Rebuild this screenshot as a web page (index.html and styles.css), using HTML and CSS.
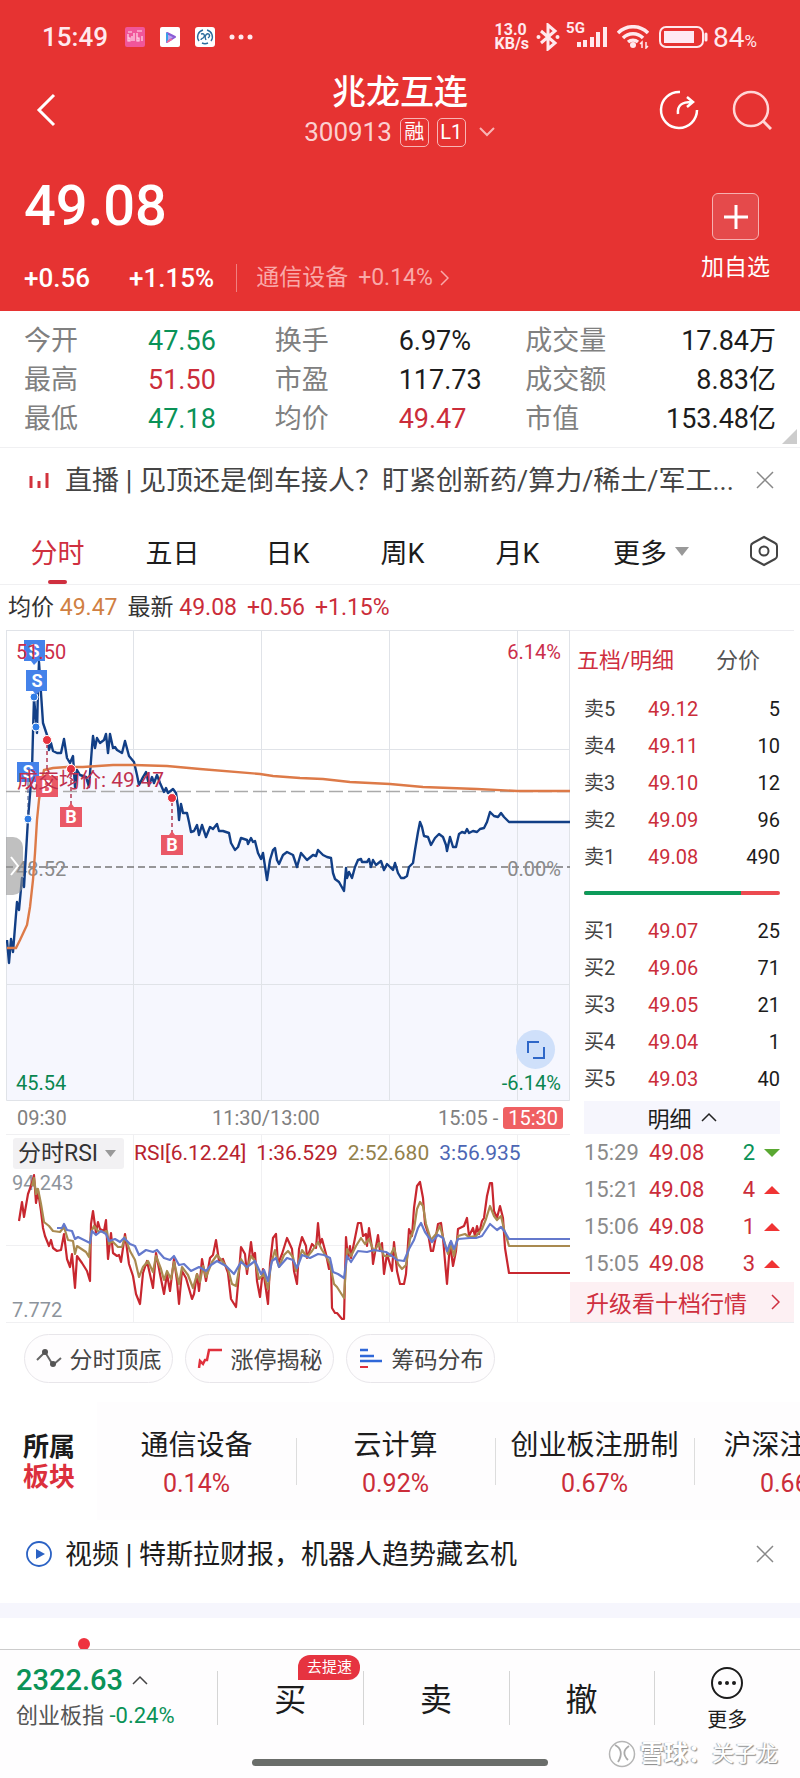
FILE: index.html
```html
<!DOCTYPE html>
<html lang="zh-CN">
<head>
    <meta charset="UTF-8">
    <meta name="viewport" content="width=device-width, initial-scale=1.0">
    <title>兆龙互连 300913</title>
    <link rel="stylesheet" href="styles.css">
</head>
<body>
    <header class="header">
        <div class="status-bar">
            <span class="clock">15:49</span>
            <svg class="app-icon" viewBox="0 0 20 20"><rect width="20" height="20" rx="2" fill="#f0569a"/><path d="M3 7v7h2v-3H3M7 9v5M9 6v8M12 6v8h2v-3h-2M17 9v5M3 5h4M12 4h5" stroke="#ffd9ea" stroke-width="1.2" fill="none"/></svg>
            <svg class="app-icon" viewBox="0 0 20 20"><rect width="20" height="20" rx="2" fill="#fff"/><path d="M7 6l8 4-8 5z" fill="#b9a6ee" stroke-width="2" stroke="#8b5bd6" stroke-linejoin="round"/><path d="M7 15V6" stroke="#3aa0e8" stroke-width="2"/><path d="M7 15l5-3" stroke="#ef6a9c" stroke-width="2"/></svg>
            <svg class="app-icon" viewBox="0 0 20 20"><rect width="20" height="20" rx="3" fill="#fff"/><path d="M8 3a7 7 0 0 0-4 11M12 3a7 7 0 0 1 4 11M7 16a7 7 0 0 0 6 0M6 7c3-1 4 1 3 3s-3 1-3 3M11 13c-1-2-1-5 1-6s4 2 1 4" fill="none" stroke="#2c6c9c" stroke-width="1.4"/></svg>
            <svg class="more-dots" viewBox="0 0 24 6"><circle cx="3" cy="3" r="2.5"/><circle cx="12" cy="3" r="2.5"/><circle cx="21" cy="3" r="2.5"/></svg>
            <span class="net-speed">13.0<br>KB/s</span>
            <svg class="bluetooth" viewBox="0 0 24 28"><path d="M5 8l14 12-7 6V2l7 6L5 20" fill="none" stroke="#ffe9ee" stroke-width="3"/><circle cx="2.5" cy="14" r="2" fill="#ffe9ee"/><circle cx="21.5" cy="14" r="2" fill="#ffe9ee"/></svg>
            <span class="signal"><span class="net-type">5G</span><svg viewBox="0 0 32 22"><path d="M3 21v-5M9 21v-7M16 21V11M22 21V6M29 21V1" stroke="#ffe9ee" stroke-width="4"/></svg></span>
            <svg class="wifi" viewBox="0 0 32 24"><g fill="none" stroke="#ffe9ee" stroke-width="3.5"><path d="M1 8a21 21 0 0 1 30 0"/><path d="M6 13a14 14 0 0 1 20 0"/><path d="M11 17a8 8 0 0 1 10 0"/></g><circle cx="16" cy="20" r="3" fill="#ffe9ee"/><path d="M25 23v-6l-2 2M29 17v6l2-2" stroke="#ffe9ee" stroke-width="1.5" fill="none"/></svg>
            <svg class="battery" viewBox="0 0 49 22"><rect x="1" y="1" width="43" height="20" rx="6" fill="none" stroke="#ffe9ee" stroke-width="2"/><rect x="5" y="5" width="30" height="12" fill="#ffe9f3"/><path d="M47 8v6" stroke="#ffe9ee" stroke-width="3" stroke-linecap="round"/></svg>
            <span class="battery-text">84<small>%</small></span>
        </div>

        <nav class="nav">
            <button class="icon-btn back" aria-label="返回"><svg width="20" height="34" viewBox="0 0 20 34"><path d="M18 2L3 17l15 15" fill="none" stroke="#fff" stroke-width="3"/></svg></button>
            <div class="title">
                <h1>兆龙互连</h1>
                <div class="code">300913 <span class="tag">融</span><span class="tag">L1</span><svg width="18" height="12" viewBox="0 0 18 12"><path d="M2 2l7 7 7-7" fill="none" stroke="#f8b5b5" stroke-width="2"/></svg></div>
            </div>
            <div class="nav-actions">
                <button class="icon-btn" aria-label="分享"><svg width="40" height="40" viewBox="0 0 40 40"><path d="M21 2a18 18 0 1 0 17 18" fill="none" stroke="#fff" stroke-width="2.5"/><path d="M19 24c-1-9 4-12 14-12M28 7l6 5-6 5" fill="none" stroke="#fff" stroke-width="2.5"/></svg></button>
                <button class="icon-btn" aria-label="搜索"><svg width="40" height="40" viewBox="0 0 40 40"><circle cx="19" cy="19" r="17" fill="none" stroke="#ffd6d6" stroke-width="2.5"/><path d="M31 31l8 8" stroke="#ffd6d6" stroke-width="3"/></svg></button>
            </div>
        </nav>

        <div class="quote">
            <div>
                <div class="price">49.08</div>
                <div class="change">
                    <span class="amount">+0.56</span>
                    <span class="percent">+1.15%</span>
                    <a class="industry" href="#">通信设备 <span>+0.14%</span><svg width="10" height="16" viewBox="0 0 10 16"><path d="M2 1l7 7-7 7" fill="none" stroke="currentColor" stroke-width="1.5"/></svg></a>
                </div>
            </div>
            <button class="follow"><span class="follow-box"><svg width="24" height="24" viewBox="0 0 24 24"><path d="M12 0v24M0 12h24" stroke="#fff" stroke-width="3"/></svg></span>加自选</button>
        </div>
    </header>

    <dl class="stats">
        <div><dt>今开</dt><dd class="down">47.56</dd></div>
        <div><dt>换手</dt><dd>6.97%</dd></div>
        <div class="last"><dt>成交量</dt><dd>17.84万</dd></div>
        <div><dt>最高</dt><dd class="up">51.50</dd></div>
        <div><dt>市盈</dt><dd>117.73</dd></div>
        <div class="last"><dt>成交额</dt><dd>8.83亿</dd></div>
        <div><dt>最低</dt><dd class="down">47.18</dd></div>
        <div><dt>均价</dt><dd class="up">49.47</dd></div>
        <div class="last"><dt>市值</dt><dd>153.48亿</dd></div>
    </dl>

    <div class="notice live">
        <svg class="notice-icon" viewBox="0 0 26 26"><path d="M5 9v12M13 14v7M21 6v15" stroke="#d2323c" stroke-width="3"/></svg>
        <a href="#">直播 | 见顶还是倒车接人？盯紧创新药/算力/稀土/军工...</a>
        <button class="icon-btn" aria-label="关闭"><svg width="18" height="18" viewBox="0 0 18 18"><path d="M1 1l16 16M17 1L1 17" stroke="#888" stroke-width="1.5"/></svg></button>
    </div>

    <div class="tabs">
        <button class="tab active">分时</button>
        <button class="tab">五日</button>
        <button class="tab">日K</button>
        <button class="tab">周K</button>
        <button class="tab">月K</button>
        <button class="tab more">更多<svg width="14" height="9" viewBox="0 0 14 9"><path d="M0 0h14L7 9z" fill="#999"/></svg></button>
        <button class="tab setting" aria-label="设置"><svg width="30" height="32" viewBox="0 0 30 32"><path d="M15 2l11 6q2 1 2 3v10q0 2-2 3l-11 6-11-6q-2-1-2-3V11q0-2 2-3z" fill="none" stroke="#444" stroke-width="2"/><circle cx="15" cy="16" r="4.5" fill="none" stroke="#444" stroke-width="2"/></svg></button>
    </div>

    <div class="summary">
        <span>均价 <b class="avg">49.47</b></span>
        <span>最新 <b class="up">49.08</b></span>
        <span class="up">+0.56</span>
        <span class="up">+1.15%</span>
    </div>

    <main class="market">
        <section class="charts">
            <div class="chart">
                <svg viewBox="0 0 564 471">
                    <path d="M1 310L3 333 5 309 7 322 11 272 13 280 16 248 18 257 22 189 26 140 27 103 28 68 30 90 31 103 32 57 33 32 35 63 37 93 41 105 43 120 45 113 47 121 51 123 55 123 58 109 61 128 64 133 67 126 69 157 71 140 74 145 80 147 83 157 86 117 87 106 89 118 91 108 94 113 98 110 100 104 102 123 104 104 107 118 111 120 116 123 119 111 123 126 128 132 131 145 133 155 137 147 140 142 143 155 146 147 148 153 151 145 154 153 158 162 160 158 162 163 167 159 170 163 172 177 173 190 175 174 177 183 181 183 183 192 185 202 188 201 191 195 193 205 196 195 200 207 204 197 207 199 211 194 213 201 223 203 225 213 229 220 232 217 235 208 241 210 245 208 249 211 252 223 255 229 257 223 261 250 264 230 267 220 269 218 271 230 273 234 277 225 281 222 287 225 291 237 295 223 301 230 307 225 312 220 317 225 325 228 327 243 333 252 338 261 340 238 346 248 352 230 363 229 370 235 375 231 378 240 381 234 387 240 389 233 395 248 401 246 403 237 407 233 409 220 414 192 418 206 425 215 433 204 437 207 441 221 444 207 447 217 453 204 461 199 467 201 478 198 484 182 492 187 495 183 503 192H564V471H1z" fill="#f6f7fe"/>
                    <path class="grid-line" d="M.5 0V470.5H563.5V0M127.5 0V471M255.5 0V471M383.5 0V471M511.5 0V471M0 .5H564M0 119.5H564M0 354.5H564"/>
                    <path d="M0 161.5H564" stroke="#aaa" stroke-width="1.5" stroke-dasharray="14 5"/>
                    <path d="M0 237H564" stroke="#777" stroke-width="1.5" stroke-dasharray="7 4"/>
                    <text class="axis" x="10" y="246">48.52</text>
                    <text class="axis" x="555" y="246" text-anchor="end">0.00%</text>
                    <path class="price-line" d="M1 310L3 333 5 309 7 322 11 272 13 280 16 248 18 257 22 189 26 140 27 103 28 68 30 90 31 103 32 57 33 32 35 63 37 93 41 105 43 120 45 113 47 121 51 123 55 123 58 109 61 128 64 133 67 126 69 157 71 140 74 145 80 147 83 157 86 117 87 106 89 118 91 108 94 113 98 110 100 104 102 123 104 104 107 118 109 117 111 120 116 123 119 111 123 126 128 132 131 145 133 155 137 147 140 142 143 155 146 147 148 153 151 145 154 153 158 162 160 158 162 163 167 159 170 163 172 177 173 190 175 174 177 183 181 183 183 192 185 202 188 201 191 195 193 205 196 195 200 207 204 197 207 199 211 194 213 201 217 201 223 203 225 213 229 220 232 217 235 208 241 210 242 214 245 208 247 212 249 211 252 223 255 229 257 223 261 250 264 230 267 220 269 218 271 230 273 234 277 225 281 222 287 225 291 237 295 223 301 230 307 225 310 226 312 220 317 225 321 227 325 228 327 243 329 249 333 252 338 261 340 238 341 248 343 242 346 248 349 237 352 230 355 229 356 232 361 232 363 229 365 237 367 230 370 235 375 231 378 240 381 234 387 240 389 233 392 243 395 248 398 248 401 246 403 237 407 233 409 220 412 202 414 192 416 197 418 206 422 207 425 215 429 208 433 204 437 207 440 215 441 221 444 207 447 217 450 217 453 204 456 202 459 203 461 199 463 203 467 201 471 202 474 199 478 198 481 192 484 182 488 186 492 187 495 183 498 187 503 192 564 192"/>
                    <path class="avg-line" d="M1 318H10L14 310 21 295 24 277 27 250 29 223 31 190 33 170 36 150 38 140 47 138 61 137 77 137 107 135 127 135 161 136 194 139 254 144 267 146 294 148 317 149 344 152 384 154 417 157 471 159 511 161 564 161"/>
                    <!-- trade marks -->
                    <path d="M22 152V186" stroke="#3b4f86" stroke-dasharray="4 3"/>
                    <path d="M41 114V144M65 143V176M166 172V203" stroke="#b23a56" stroke-width="1.5" stroke-dasharray="4 3"/>
                    <g fill="#2f7de6" stroke="#fff">
                        <circle cx="28" cy="67" r="4"/><circle cx="30" cy="97" r="4"/><circle cx="22" cy="189" r="4"/>
                    </g>
                    <g fill="#e8323e" stroke="#fff">
                        <circle cx="41" cy="110" r="4.5"/><circle cx="65" cy="139" r="4.5"/><circle cx="166" cy="168" r="4.5"/>
                    </g>
                    <g class="mark sell">
                        <path d="M18 10h21v21h-7l-4 4-3-4h-7zM20 40h21v21h-7l-4 4-3-4h-7zM11 132h22v20H11z"/>
                        <text x="28" y="27">S</text><text x="31" y="57">S</text><text x="22" y="148">S</text>
                    </g>
                    <g class="mark buy">
                        <path d="M30 146h8l3-4 3 4h8v21H30zM54 177h8l3-4 3 4h8v20H54zM155 205h8l3-4 3 4h8v20h-22z"/>
                        <text x="41" y="163">B</text><text x="65" y="193">B</text><text x="166" y="221">B</text>
                    </g>
                    <text class="axis high" x="10" y="29">51.50</text>
                    <text class="axis high" x="555" y="29" text-anchor="end">6.14%</text>
                    <text class="axis low" x="10" y="460">45.54</text>
                    <text class="axis low" x="555" y="460" text-anchor="end">-6.14%</text>
                    <text class="cost" x="11" y="157">成交均价: 49.47</text>
                </svg>
                <button class="handle" aria-label="展开"><svg width="10" height="20" viewBox="0 0 10 20"><path d="M1 1l7 9-7 9" fill="none" stroke="#fff" stroke-width="2"/></svg></button>
                <button class="expand" aria-label="全屏"><svg width="18" height="18" viewBox="0 0 18 18"><path d="M1 12V1h11M17 6v11H6" fill="none" stroke="#2e67c8" stroke-width="2"/></svg></button>
            </div>
            <div class="times">
                <span>09:30</span><span>11:30/13:00</span><span>15:05 - <mark>15:30</mark></span>
            </div>
            <div class="rsi">
                <div class="rsi-head">
                    <span class="picker">
                        <select aria-label="指标"><option>分时RSI</option></select>
                        <svg width="11" height="7" viewBox="0 0 11 7"><path d="M0 0h11L5.5 7z" fill="#999"/></svg>
                    </span>
                    <span class="r1">RSI[6.12.24]</span><span class="r1">1:36.529</span><span class="r2">2:52.680</span><span class="r3">3:56.935</span>
                </div>
                <svg viewBox="0 0 564 189">
                    <path class="grid-line light" d="M0 .5H564M127.5 0V189M255.5 0V189M383.5 0V189M511.5 0V189M0 111.5H564M0 188.5H564"/>
                    <text class="axis value" x="6" y="56">94.243</text>
                    <text class="axis value" x="6" y="183">7.772</text>
                    <path class="rsi-line" stroke="#c8272f" d="M13 87L16 68 18 83 22 60 26 49 28 41 30 69 32 57 35 77 37 94 39 102 43 112 45 106 47 114 51 117 55 116 58 100 61 125 64 133 66 120 69 154 71 122 76 129 81 137 84 147 85 90 87 77 90 99 92 88 94 95 98 97 100 86 102 125 105 99 107 119 111 122 113 121 115 128 119 100 123 130 127 142 130 160 134 170 137 139 141 127 147 154 150 119 154 140 158 160 161 140 164 157 168 125 171 147 173 170 176 137 180 144 186 165 188 160 191 140 193 157 196 125 200 147 204 124 207 121 210 106 213 127 217 125 222 139 225 165 230 173 233 139 235 113 239 120 241 140 245 108 247 124 249 119 251 147 254 163 257 135 262 170 264 130 267 104 270 100 272 130 276 120 281 104 286 115 288 137 291 150 293 115 296 103 300 112 301 124 306 110 310 114 312 89 314 110 316 105 320 120 323 135 325 130 326 174 329 179 331 179 336 185 338 185 340 103 342 125 344 112 345 124 349 104 352 89 355 89 357 102 360 100 361 112 363 94 366 114 367 130 372 101 374 117 376 109 378 140 381 120 386 137 388 108 391 137 394 150 398 150 400 140 403 95 406 102 408 74 411 52 414 48 417 64 419 90 422 99 425 117 427 117 430 102 432 90 435 89 437 104 441 150 444 109 447 132 450 117 452 95 458 92 461 84 463 102 467 94 469 102 471 92 473 100 476 87 478 84 481 62 484 49 486 49 488 77 491 84 494 72 497 84 499 114 503 139 564 139"/>
                    <path class="rsi-line" stroke="#a98a50" d="M26 52L28 44 30 60 32 55 35 70 38 88 43 92 47 97 54 98 58 93 62 106 67 107 69 120 71 112 80 118 83 123 85 98 88 92 92 97 98 98 101 97 103 110 106 107 112 113 116 113 119 103 124 117 129 126 133 143 137 133 142 127 147 138 150 122 155 135 158 146 161 137 165 145 168 128 173 150 176 133 182 141 187 154 191 140 194 148 197 132 200 143 206 128 211 121 217 128 222 135 226 150 230 152 235 125 241 135 245 122 249 127 253 145 258 140 262 155 265 130 269 116 273 133 278 121 282 117 287 123 290 137 296 116 301 123 306 117 312 108 316 116 320 122 324 130 328 150 331 153 338 164 341 115 345 122 350 112 355 104 359 110 363 105 368 118 373 109 378 122 384 122 388 114 392 130 396 135 400 131 404 105 408 95 411 75 414 68 417 72 420 90 425 106 430 100 434 92 437 103 442 120 445 110 448 122 452 102 459 100 463 103 470 102 476 95 480 85 484 72 488 82 491 86 495 82 498 95 503 112 564 112"/>
                    <path class="rsi-line" stroke="#6479cc" d="M51 94H56L58 90 61 96 66 97 69 105 72 103 80 107 84 109 86 97 90 101 95 97 100 100 103 107 109 105 114 108 118 104 124 110 129 112 133 121 140 116 147 118 151 116 158 124 164 126 168 122 173 131 178 130 185 137 193 133 200 137 205 131 211 127 220 132 228 140 235 128 241 133 249 127 255 140 258 136 262 147 266 127 270 124 273 133 281 124 287 126 291 134 296 121 304 124 312 120 318 121 324 124 327 138 332 140 338 144 341 122 345 128 352 117 361 118 368 116 374 117 380 118 386 122 391 126 398 127 403 115 408 106 412 94 415 89 419 98 426 108 432 101 437 104 441 117 445 107 448 115 452 105 464 104 470 104 476 102 480 96 484 90 491 96 495 93 499 98 503 105 564 105"/>
                </svg>
            </div>
        </section>

        <aside class="panel">
            <div class="panel-tabs"><button class="active">五档/明细</button><button>分价</button></div>
            <table class="orders">
                <tr><th>卖5</th><td>49.12</td><td>5</td></tr>
                <tr><th>卖4</th><td>49.11</td><td>10</td></tr>
                <tr><th>卖3</th><td>49.10</td><td>12</td></tr>
                <tr><th>卖2</th><td>49.09</td><td>96</td></tr>
                <tr><th>卖1</th><td>49.08</td><td>490</td></tr>
            </table>
            <div class="ratio"><span style="width: 80%"></span></div>
            <table class="orders">
                <tr><th>买1</th><td>49.07</td><td>25</td></tr>
                <tr><th>买2</th><td>49.06</td><td>71</td></tr>
                <tr><th>买3</th><td>49.05</td><td>21</td></tr>
                <tr><th>买4</th><td>49.04</td><td>1</td></tr>
                <tr><th>买5</th><td>49.03</td><td>40</td></tr>
            </table>
            <button class="detail">明细<svg width="16" height="10" viewBox="0 0 16 10"><path d="M1 9l7-7 7 7" fill="none" stroke="#222" stroke-width="1.5"/></svg></button>
            <table class="ticks">
                <tr><th>15:29</th><td>49.08</td><td class="down">2</td><td><svg width="16" height="8" viewBox="0 0 16 8"><path d="M0 0h16L8 8z" fill="#5aa832"/></svg></td></tr>
                <tr><th>15:21</th><td>49.08</td><td>4</td><td><svg width="16" height="8" viewBox="0 0 16 8"><path d="M0 8h16L8 0z" fill="#f03434"/></svg></td></tr>
                <tr><th>15:06</th><td>49.08</td><td>1</td><td><svg width="16" height="8" viewBox="0 0 16 8"><path d="M0 8h16L8 0z" fill="#f03434"/></svg></td></tr>
                <tr><th>15:05</th><td>49.08</td><td>3</td><td><svg width="16" height="8" viewBox="0 0 16 8"><path d="M0 8h16L8 0z" fill="#f03434"/></svg></td></tr>
            </table>
            <a class="upgrade" href="#">升级看十档行情<svg width="9" height="16" viewBox="0 0 9 16"><path d="M1 1l7 7-7 7" fill="none" stroke="#cf2f3f" stroke-width="1.5"/></svg></a>
        </aside>
    </main>

    <div class="chips">
        <button><svg width="26" height="20" viewBox="0 0 26 20"><path d="M1 12l8-8 8 13 8-7" fill="none" stroke="#666" stroke-width="2"/><circle cx="9" cy="4" r="3" fill="#555"/><circle cx="17" cy="16" r="3" fill="#555"/></svg>分时顶底</button>
        <button><svg width="26" height="20" viewBox="0 0 26 20"><path d="M2 20l1-7 3 3 2-4h2l2-10h13" fill="none" stroke="#e0303c" stroke-width="2.5"/></svg>涨停揭秘</button>
        <button><svg width="26" height="20" viewBox="0 0 26 20"><path d="M2 2h8M2 8h14M2 13h22" stroke="#2f67d8" stroke-width="2.5"/><path d="M2 19h8" stroke="#e0303c" stroke-width="2"/></svg>筹码分布</button>
    </div>

    <section class="sectors">
        <h2>所属<em>板块</em></h2>
        <div class="sector-list">
            <a href="#">通信设备<span>0.14%</span></a>
            <a href="#">云计算<span>0.92%</span></a>
            <a href="#">创业板注册制<span>0.67%</span></a>
            <a href="#">沪深注册制<span>0.66%</span></a>
        </div>
    </section>

    <div class="notice video">
        <svg class="notice-icon" viewBox="0 0 26 26"><circle cx="13" cy="13" r="12" fill="none" stroke="#2b62c4" stroke-width="1.8"/><path d="M10 8l9 5-9 5z" fill="#2b62c4"/></svg>
        <a href="#">视频 | 特斯拉财报，机器人趋势藏玄机</a>
        <button class="icon-btn" aria-label="关闭"><svg width="18" height="18" viewBox="0 0 18 18"><path d="M1 1l16 16M17 1L1 17" stroke="#888" stroke-width="1.5"/></svg></button>
    </div>
    <div class="next-section"><i class="red-dot"></i></div>

    <footer class="footer">
        <div class="actions">
            <a class="index" href="#">
                <strong>2322.63<svg width="16" height="10" viewBox="0 0 16 10"><path d="M1 9l7-7 7 7" fill="none" stroke="#444" stroke-width="1.5"/></svg></strong>
                <span>创业板指 <b>-0.24%</b></span>
            </a>
            <button>买<span class="badge">去提速</span></button>
            <button>卖</button>
            <button>撤</button>
            <button class="menu"><svg width="34" height="34" viewBox="0 0 34 34"><circle cx="17" cy="17" r="15" fill="none" stroke="#1c1c1c" stroke-width="2"/><g fill="#1c1c1c"><circle cx="10" cy="17" r="2"/><circle cx="17" cy="17" r="2"/><circle cx="24" cy="17" r="2"/></g></svg>更多</button>
        </div>
        <div class="home-bar"></div>
        <div class="watermark"><svg width="28" height="28" viewBox="0 0 28 28"><circle cx="14" cy="14" r="12.5" fill="#fff" stroke="#b5b5b5" stroke-width="1.5"/><path d="M7 5c6 3 8 9 3 17M21 6c-6 4-6 9-1 14" fill="none" stroke="#aaa" stroke-width="1.8"/></svg><b>雪球：</b>关子龙</div>
    </footer>
</body>
</html>
```

FILE: styles.css
```css
* {
    box-sizing: border-box;
}
body {
    margin: 0;
    font-family: Roboto, "Noto Sans CJK SC", sans-serif;
    font-size: 22px;
    color: #1c1c1c;
    background-color: #fff;
    overflow-x: hidden;
}
button, select {
    font: inherit;
    color: inherit;
    background: none;
    border: none;
    padding: 0;
    cursor: pointer;
}
a {
    color: inherit;
    text-decoration: none;
}
svg {
    display: block;
    flex: none;
}
.up {
    color: #cb2d3a;
}
.down {
    color: #0a9257;
}
.icon-btn {
    display: flex;
    align-items: center;
}

/* header */
.header {
    background-color: #e63332;
    color: #fff;
}
.status-bar {
    display: flex;
    align-items: center;
    height: 72px;
    padding: 2px 42px 0;
    color: #ffe9ee;
}
.clock {
    font-size: 26px;
    font-weight: 500;
    margin-right: 2px;
}
.app-icon {
    width: 20px;
    height: 20px;
    margin-left: 15px;
}
.more-dots {
    width: 24px;
    height: 6px;
    margin-left: 14px;
    fill: #ffe9ee;
}
.net-speed {
    margin-left: auto;
    font-size: 16px;
    line-height: 14px;
    font-weight: 700;
}
.bluetooth {
    width: 24px;
    height: 28px;
    margin-left: 7px;
}
.signal {
    position: relative;
    width: 42px;
    margin-left: 6px;
}
.signal svg {
    width: 32px;
    height: 22px;
    margin-left: 10px;
}
.net-type {
    position: absolute;
    left: 0;
    top: -5px;
    font-size: 15px;
    line-height: 15px;
    font-weight: 700;
}
.wifi {
    width: 32px;
    height: 24px;
    margin-left: 9px;
}
.battery {
    width: 49px;
    height: 22px;
    margin-left: 10px;
}
.battery-text {
    font-size: 28px;
    margin-left: 5px;
    margin-right: 1px;
}
.battery-text small {
    font-size: 17px;
}
.nav {
    display: grid;
    grid-template-columns: 1fr auto 1fr;
    align-items: center;
    height: 80px;
    padding: 0 28px;
}
.nav .back {
    padding: 0 0 4px 8px;
}
.title {
    text-align: center;
}
.title h1 {
    margin: 0;
    font-size: 34px;
    line-height: 40px;
    font-weight: 500;
}
.code {
    display: flex;
    align-items: center;
    justify-content: center;
    gap: 8px;
    height: 40px;
    font-size: 26px;
    color: #fbd0d0;
}
.tag {
    width: 29px;
    height: 29px;
    border: 1px solid #f8b5b5;
    border-radius: 5px;
    font-size: 20px;
    line-height: 27px;
    color: #fff;
}
.code svg {
    margin-left: 4px;
}
.nav-actions {
    display: flex;
    justify-content: flex-end;
    gap: 33px;
    padding-bottom: 4px;
}
.quote {
    display: flex;
    justify-content: space-between;
    padding: 22px 30px 17px 24px;
}
.price {
    font-size: 56px;
    line-height: 64px;
    font-weight: 500;
}
.change {
    display: flex;
    align-items: center;
    margin-top: 24px;
    line-height: 32px;
    font-size: 26px;
    font-weight: 500;
}
.percent {
    margin-left: 39px;
    padding-right: 22px;
}
.industry {
    display: flex;
    align-items: center;
    gap: 10px;
    font-size: 23px;
    font-weight: 400;
    color: #f9a9a9;
    position: relative;
    padding-left: 20px;
}
.industry::before {
    content: "";
    position: absolute;
    left: 0;
    top: 2px;
    width: 1px;
    height: 28px;
    background-color: #f08080;
}
.industry svg {
    margin-left: -4px;
}
.follow {
    display: flex;
    flex-direction: column;
    align-items: center;
    gap: 14px;
    margin-top: 19px;
    font-size: 23px;
    line-height: 28px;
}
.follow-box {
    display: flex;
    align-items: center;
    justify-content: center;
    width: 47px;
    height: 47px;
    border: 1px solid #f6b0b0;
    border-radius: 6px;
    background-color: #e54a4b;
}

/* key figures */
.stats {
    position: relative;
    display: grid;
    grid-template-columns: repeat(3, 1fr);
    margin: 0;
    padding: 11px 24px 8px;
    border-bottom: 1px solid #f0f0f2;
    font-size: 27px;
    line-height: 39px;
}
.stats div {
    display: flex;
}
.stats dt {
    width: 124px;
    color: #808080;
}
.stats dd {
    margin: 0;
}
.stats .last dd {
    margin-left: auto;
}
.stats::after {
    content: "";
    position: absolute;
    right: 3px;
    bottom: 3px;
    border-left: 15px solid transparent;
    border-bottom: 15px solid #ccc;
}

/* one line notices */
.notice {
    display: flex;
    align-items: center;
    height: 64px;
    padding: 0 26px;
    font-size: 27px;
}
.notice-icon {
    width: 26px;
    height: 26px;
    margin-right: 13px;
}
.notice a {
    padding-bottom: 4px;
    white-space: nowrap;
}
.notice .icon-btn {
    margin-left: auto;
}
.live {
    color: #444;
}
.video {
    height: 68px;
    margin-bottom: 15px;
}

/* period tabs */
.tabs {
    display: flex;
    height: 73px;
    padding-top: 6px;
    border-bottom: 1px solid #f0f0f2;
    font-size: 27px;
}
.tab {
    position: relative;
    flex: 115 0 0;
    display: flex;
    align-items: center;
    justify-content: center;
}
.tab.active {
    color: #cf2f3f;
}
.tab.active::after {
    content: "";
    position: absolute;
    bottom: 0;
    width: 19px;
    height: 4px;
    border-radius: 2px;
    background-color: #cf2f3f;
}
.tab.more {
    flex-grow: 152;
    gap: 8px;
}
.tab.setting {
    flex-grow: 73;
}
.summary {
    display: flex;
    gap: 10px;
    padding-left: 8px;
    font-size: 23px;
    line-height: 45px;
    color: #333;
}
.summary b {
    font-weight: 400;
}
.summary .up {
    color: #cb2d3a;
}
.summary .avg {
    color: #d08043;
}

/* charts and order book */
.market {
    display: flex;
    padding: 0 6px;
}
.charts {
    flex: 1;
    min-width: 0;
}
.charts text {
    font-family: Roboto, "Noto Sans CJK SC", sans-serif;
}
.chart {
    position: relative;
}
.chart > svg, .rsi > svg {
    width: 100%;
    height: auto;
}
.grid-line {
    fill: none;
    stroke: #e0e3e8;
}
.grid-line.light {
    stroke: #f0f0f2;
}
.price-line {
    fill: none;
    stroke: #123f86;
    stroke-width: 2.4;
    stroke-linejoin: round;
}
.avg-line {
    fill: none;
    stroke: #dd7a48;
    stroke-width: 2.4;
}
.axis {
    font-size: 20px;
    fill: #8a8a8a;
}
.axis.high {
    fill: #cb2d4a;
}
.axis.low {
    fill: #0a8650;
}
.axis.value {
    fill: #8d949c;
}
.cost {
    font-size: 21px;
    fill: #c0304e;
}
.mark text {
    font-size: 18px;
    font-weight: 700;
    text-anchor: middle;
    fill: #fff;
}
.sell path {
    fill: #4482ea;
}
.buy path {
    fill: #ea5866;
}
.handle {
    position: absolute;
    left: 0;
    top: 44%;
    display: flex;
    align-items: center;
    justify-content: center;
    width: 17px;
    height: 58px;
    border-radius: 0 10px 10px 0;
    background-color: rgba(150, 150, 150, 0.6);
}
.expand {
    position: absolute;
    right: 15px;
    bottom: 32px;
    display: flex;
    align-items: center;
    justify-content: center;
    width: 39px;
    height: 39px;
    border-radius: 50%;
    background-color: #cfe0fa;
}
.times {
    display: grid;
    grid-template-columns: 195px 1fr auto;
    align-items: center;
    height: 33px;
    padding: 0 7px 0 11px;
    font-size: 20px;
    color: #808080;
}
.times mark {
    display: inline-block;
    padding: 0 5px;
    line-height: 22px;
    border-radius: 3px;
    color: #fff;
    background-color: #ef6062;
}
.rsi {
    position: relative;
}
.rsi-head {
    position: absolute;
    left: 7px;
    top: 4px;
    display: flex;
    align-items: center;
    gap: 10px;
    font-size: 21px;
    line-height: 31px;
    white-space: nowrap;
}
.picker {
    display: flex;
    align-items: center;
    position: relative;
    width: 111px;
    height: 31px;
    border-radius: 3px;
    background-color: #f2f1f3;
}
.picker select {
    appearance: none;
    width: 100%;
    height: 31px;
    padding-left: 5px;
    font-size: 23px;
    color: #333;
}
.picker svg {
    position: absolute;
    right: 8px;
    pointer-events: none;
}
.r1 {
    color: #b8232d;
}
.r2 {
    color: #93814b;
}
.r3 {
    color: #4d66b4;
}
.rsi-line {
    fill: none;
    stroke-width: 2.2;
    stroke-linejoin: round;
}
.panel {
    width: 224px;
    border-top: 1px solid #ececf0;
    border-bottom: 1px solid #ececf0;
}
.panel-tabs {
    display: flex;
    justify-content: space-between;
    height: 59px;
    padding: 0 34px 5px 7px;
    color: #555;
}
.panel-tabs .active {
    color: #cf2f3f;
}
.panel table {
    width: 196px;
    margin: 0 14px;
    border-collapse: collapse;
    table-layout: fixed;
}
.panel tr {
    height: 37px;
}
.panel th, .panel td {
    padding: 0;
    line-height: 24px;
    font-weight: 400;
    text-align: left;
}
.orders {
    font-size: 20px;
}
.orders th {
    width: 64px;
    color: #444;
}
.orders td {
    color: #cb2d3a;
}
.orders td:last-child {
    color: #1c1c1c;
    text-align: right;
}
.ratio {
    height: 4px;
    margin: 16px 14px 17px;
    border-radius: 2px;
    overflow: hidden;
    background-color: #ec4a50;
}
.ratio span {
    display: block;
    height: 4px;
    background-color: #0d9b5a;
}
.detail {
    display: flex;
    align-items: center;
    justify-content: center;
    gap: 9px;
    width: 196px;
    height: 33px;
    margin: 4px 14px 0;
    padding-bottom: 2px;
    background-color: #f6f6fd;
}
.ticks th {
    width: 65px;
    color: #8a8a8a;
}
.ticks td {
    color: #cb2d3a;
}
.ticks td:nth-child(3) {
    width: 42px;
    text-align: right;
}
.ticks td:last-child {
    width: 25px;
    padding-left: 9px;
}
.ticks td.down {
    color: #0a9257;
}
.upgrade {
    display: flex;
    align-items: center;
    justify-content: space-between;
    height: 40px;
    padding: 0 14px 0 16px;
    font-size: 23px;
    color: #cf2f3f;
    background-color: #fdf0f3;
}

/* tool chips */
.chips {
    display: flex;
    gap: 12px;
    padding: 11px 24px 19px;
}
.chips button {
    display: flex;
    align-items: center;
    justify-content: center;
    gap: 8px;
    width: 149px;
    height: 49px;
    padding-bottom: 2px;
    border: 1px solid #e8e6ea;
    border-radius: 25px;
    background-color: #fefdfe;
    font-size: 23px;
    color: #444;
}

/* related sectors */
.sectors {
    display: flex;
    align-items: center;
    height: 118px;
    overflow: hidden;
}
.sectors h2 {
    flex: none;
    width: 97px;
    margin: 0;
    padding: 2px 0 0 23px;
    font-size: 26px;
    line-height: 30px;
}
.sectors em {
    display: block;
    font-style: normal;
    color: #dc303c;
}
.sector-list {
    display: flex;
    background-color: #fefdfe;
}
.sector-list a {
    position: relative;
    flex: none;
    width: 199px;
    height: 118px;
    padding-top: 25px;
    font-size: 28px;
    line-height: 38px;
    text-align: center;
}
.sector-list a + a::before {
    content: "";
    position: absolute;
    left: 0;
    top: 36px;
    width: 1px;
    height: 47px;
    background-color: #ddd;
}
.sector-list span {
    display: block;
    font-size: 25px;
    color: #cb2d3a;
}
.next-section {
    position: relative;
    height: 46px;
    border-top: 15px solid #f6f6fd;
    overflow: hidden;
}
.red-dot {
    position: absolute;
    left: 78px;
    bottom: -1px;
    width: 12px;
    height: 12px;
    border-radius: 50%;
    background-color: #ee333f;
}

/* trade bar */
.footer {
    position: relative;
    border-top: 1px solid #ccc;
    background-color: #fefdfe;
    padding-bottom: 12px;
}
.actions {
    display: grid;
    grid-template-columns: 218fr repeat(4, 146fr);
    height: 97px;
}
.actions button {
    position: relative;
    padding-bottom: 3px;
    font-size: 32px;
}
.actions button::before {
    content: "";
    position: absolute;
    left: 0;
    top: 21px;
    width: 1px;
    height: 54px;
    background-color: #d5d5d5;
}
.index {
    padding: 12px 0 0 16px;
    color: #555;
    line-height: 36px;
}
.index strong {
    display: flex;
    align-items: center;
    gap: 9px;
    font-size: 29px;
    font-weight: 500;
    color: #0a9257;
}
.index b {
    font-weight: 400;
    color: #0a9257;
}
.actions .menu {
    display: flex;
    flex-direction: column;
    align-items: center;
    padding-top: 16px;
    gap: 6px;
    font-size: 20px;
    line-height: 28px;
}
.badge {
    position: absolute;
    left: 81px;
    top: 5px;
    width: 62px;
    border-radius: 12px 12px 12px 0;
    background-color: #e63340;
    color: #fff;
    font-size: 15px;
    line-height: 25px;
}
.home-bar {
    width: 37%;
    height: 7px;
    margin: 12px auto 0;
    border-radius: 4px;
    background-color: #6a6d6a;
}
.watermark {
    position: absolute;
    right: 22px;
    bottom: 8px;
    display: flex;
    align-items: center;
    line-height: 32px;
    color: #fff;
    text-shadow: 1px 1px 1px #888, -1px 0 1px #aaa;
}
.watermark b {
    margin-left: 4px;
    font-size: 24px;
}
```
